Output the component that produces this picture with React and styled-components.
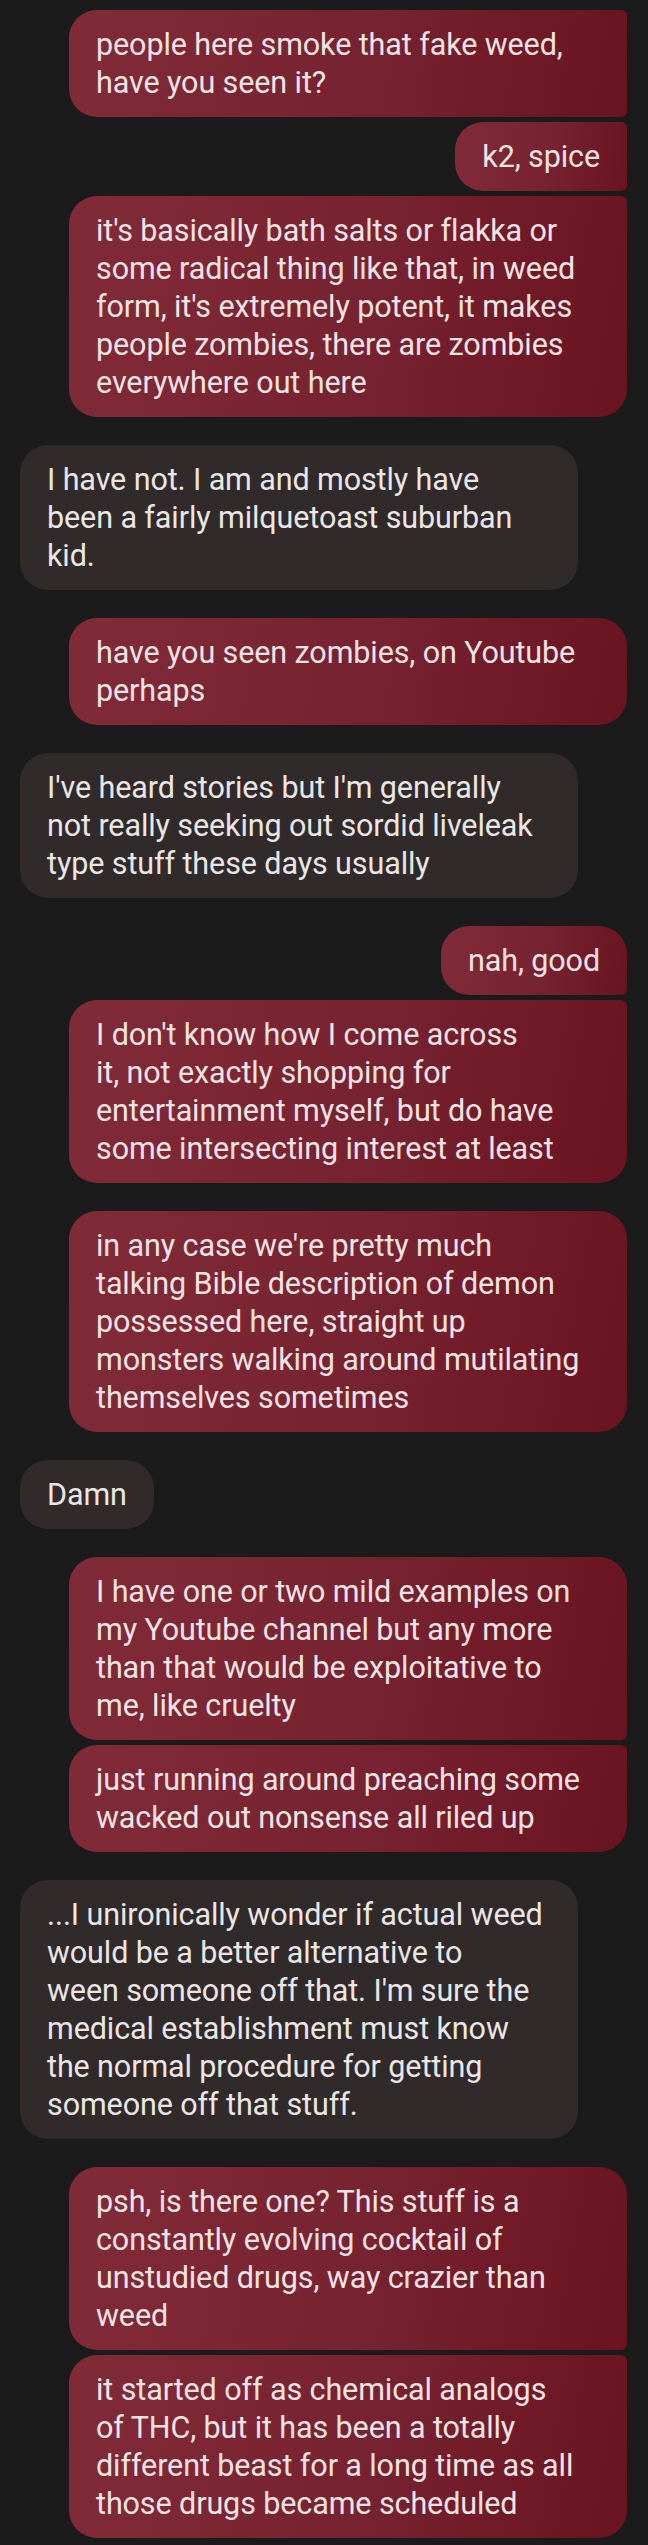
import styled, { createGlobalStyle, css } from 'styled-components';

const GlobalStyle = createGlobalStyle`
  html, body {
    margin: 0;
    padding: 0;
    background: #1b1b1b;
  }
  body {
    font-family: Roboto, "Noto Sans", "Liberation Sans", sans-serif;
    -webkit-font-smoothing: antialiased;
  }
`;

const Thread = styled.div`
  width: 648px;
  min-height: 2545px;
  box-sizing: border-box;
  background: #1b1b1b;
  padding: 10px 21px 8px 20px;
  display: flex;
  flex-direction: column;
  gap: 28px;
`;

const Group = styled.div`
  display: flex;
  flex-direction: column;
  align-items: ${(p) => (p.$sent ? 'flex-end' : 'flex-start')};
  gap: 5px;
`;

const BIG = '28px';
const SMALL = '6px';

// wrapped bubbles fill the max width, like the real app does
const Bubble = styled.div`
  max-width: 558px;
  width: ${(p) => (p.$wrapped ? '558px' : 'auto')};
  box-sizing: border-box;
  padding: 16px 27px 15px;
  font-size: 30.5px;
  line-height: 38px;
  letter-spacing: -0.1px;
  border-radius: ${BIG};
  ${(p) =>
    p.$sent
      ? css`
          background: linear-gradient(100deg, #822b38 0%, #772230 55%, #6a1321 100%);
          color: #f4e3e5;
          border-top-right-radius: ${p.$first ? BIG : SMALL};
          border-bottom-right-radius: ${p.$last ? BIG : SMALL};
        `
      : css`
          background: #302a2b;
          color: #ebe6e6;
        `}
`;

const conversation = [
  {
    sent: true,
    continued: true,
    messages: [
      ['people here smoke that fake weed,', 'have you seen it?'],
      ['k2, spice'],
      [
        "it's basically bath salts or flakka or",
        'some radical thing like that, in weed',
        "form, it's extremely potent, it makes",
        'people zombies, there are zombies',
        'everywhere out here',
      ],
    ],
  },
  {
    sent: false,
    messages: [['I have not. I am and mostly have', 'been a fairly milquetoast suburban', 'kid.']],
  },
  {
    sent: true,
    messages: [['have you seen zombies, on Youtube', 'perhaps']],
  },
  {
    sent: false,
    messages: [
      [
        "I've heard stories but I'm generally",
        'not really seeking out sordid liveleak',
        'type stuff these days usually',
      ],
    ],
  },
  {
    sent: true,
    messages: [
      ['nah, good'],
      [
        "I don't know how I come across",
        'it, not exactly shopping for',
        'entertainment myself, but do have',
        'some intersecting interest at least',
      ],
    ],
  },
  {
    sent: true,
    messages: [
      [
        "in any case we're pretty much",
        'talking Bible description of demon',
        'possessed here, straight up',
        'monsters walking around mutilating',
        'themselves sometimes',
      ],
    ],
  },
  {
    sent: false,
    messages: [['Damn']],
  },
  {
    sent: true,
    messages: [
      [
        'I have one or two mild examples on',
        'my Youtube channel but any more',
        'than that would be exploitative to',
        'me, like cruelty',
      ],
      ['just running around preaching some', 'wacked out nonsense all riled up'],
    ],
  },
  {
    sent: false,
    messages: [
      [
        '...I unironically wonder if actual weed',
        'would be a better alternative to',
        "ween someone off that. I'm sure the",
        'medical establishment must know',
        'the normal procedure for getting',
        'someone off that stuff.',
      ],
    ],
  },
  {
    sent: true,
    messages: [
      [
        'psh, is there one? This stuff is a',
        'constantly evolving cocktail of',
        'unstudied drugs, way crazier than',
        'weed',
      ],
      [
        'it started off as chemical analogs',
        'of THC, but it has been a totally',
        'different beast for a long time as all',
        'those drugs became scheduled',
      ],
    ],
  },
];

const Lines = ({ lines }) =>
  lines.map((line, i) => (
    <span key={i}>
      {line}
      {i < lines.length - 1 && <br />}
    </span>
  ));

const App = () => {
  return (
    <>
      <GlobalStyle />
      <Thread>
        {conversation.map((group, gi) => (
          <Group key={gi} $sent={group.sent}>
            {group.messages.map((lines, mi) => (
              <Bubble
                key={mi}
                $sent={group.sent}
                $wrapped={lines.length > 1}
                $first={mi === 0 && !group.continued}
                $last={mi === group.messages.length - 1}
              >
                <Lines lines={lines} />
              </Bubble>
            ))}
          </Group>
        ))}
      </Thread>
    </>
  );
};

export default App;
